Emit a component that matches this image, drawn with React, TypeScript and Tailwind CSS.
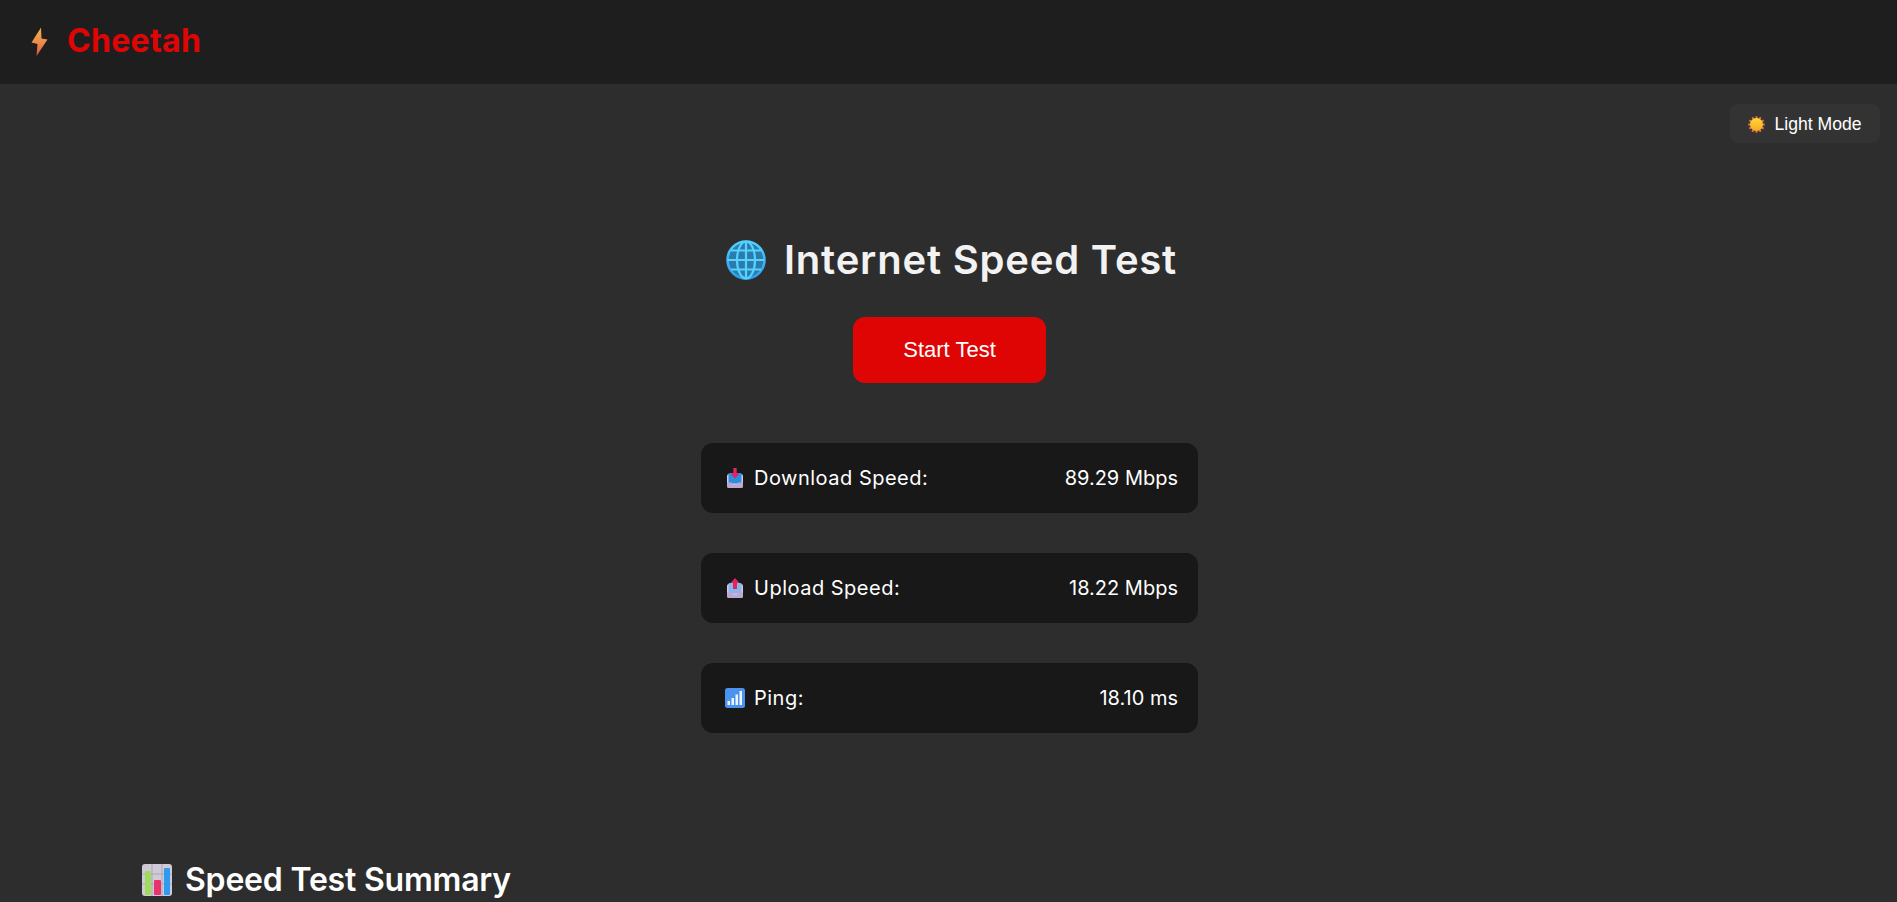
import React from 'react'

const poppins = "font-['Inter','Noto_Sans',sans-serif]"

function BoltIcon() {
  return (
    <svg width="17" height="30" viewBox="0 0 17 30" className="shrink-0">
      <defs>
        <linearGradient id="bolt" x1="0" y1="0" x2="0" y2="1">
          <stop offset="0" stopColor="#f2b04c" />
          <stop offset="0.55" stopColor="#ec8a4a" />
          <stop offset="1" stopColor="#d9534f" />
        </linearGradient>
      </defs>
      <path d="M10 0.5 L0.5 15.5 L6.5 17 L5.5 29 L16.5 12.5 L10.5 11.5 Z" fill="url(#bolt)" />
    </svg>
  )
}

function SunIcon() {
  const rays = [0, 30, 60, 90, 120, 150, 180, 210, 240, 270, 300, 330]
  return (
    <svg width="17" height="17" viewBox="0 0 34 34" className="shrink-0">
      <defs>
        <linearGradient id="sun" x1="0" y1="0" x2="0" y2="1">
          <stop offset="0" stopColor="#fdd835" />
          <stop offset="1" stopColor="#f9a825" />
        </linearGradient>
      </defs>
      {rays.map((r) => (
        <rect key={r} x="15" y="0.5" width="4" height="5" fill="#e8743b" transform={`rotate(${r} 17 17)`} />
      ))}
      <circle cx="17" cy="17" r="13" fill="url(#sun)" />
    </svg>
  )
}

function GlobeIcon() {
  return (
    <svg width="40" height="40" viewBox="0 0 40 40" fill="none" className="shrink-0">
      <defs>
        <linearGradient id="globe-ring" x1="0" y1="0" x2="0" y2="1">
          <stop offset="0" stopColor="#4fd0ff" />
          <stop offset="1" stopColor="#2f9cf0" />
        </linearGradient>
      </defs>
      <circle cx="20" cy="20" r="18.5" fill="#2b7cab" stroke="url(#globe-ring)" strokeWidth="2.5" />
      <g stroke="#55d2ff" strokeWidth="2.2">
        <ellipse cx="20" cy="20" rx="9" ry="18.5" />
        <path d="M20 1.5V38.5M1.5 20H38.5M5 10.5H35M5 29.5H35" />
      </g>
    </svg>
  )
}

function InboxIcon({ up }: { up?: boolean }) {
  return (
    <svg width="16" height="20" viewBox="0 0 16 20" className="shrink-0">
      <rect x="0" y="6" width="16" height="14" rx="2" fill="#d8c6e4" />
      <rect x="1.5" y="5" width="13" height="10.5" rx="1" fill={up ? '#8ab4ea' : '#2b8fdd'} />
      <path d="M0 14.5 H4.5 L6 16.5 H10 L11.5 14.5 H16 V18 a2 2 0 0 1 -2 2 H2 a2 2 0 0 1 -2 -2 Z" fill="#bda8d2" />
      {up ? (
        <path d="M8 0 L12.5 5 H10 V11 H6 V5 H3.5 Z" fill="#e0245e" />
      ) : (
        <path d="M6.3 0 H9.7 V5.5 H12.5 L8 10.5 L3.5 5.5 H6.3 Z" fill="#e0245e" />
      )}
    </svg>
  )
}

function SignalIcon() {
  return (
    <svg width="20" height="20" viewBox="0 0 20 20" className="shrink-0">
      <rect x="0" y="0" width="20" height="20" rx="2.5" fill="#4a94f0" />
      <g fill="#eef4fd">
        <rect x="2.5" y="13" width="2.5" height="4" />
        <rect x="6.5" y="10" width="2.5" height="7" />
        <rect x="10.5" y="6.5" width="2.5" height="10.5" />
        <rect x="14.5" y="3" width="2.5" height="14" />
      </g>
    </svg>
  )
}

function ChartIcon() {
  return (
    <svg width="30" height="32" viewBox="0 0 30 32" className="shrink-0">
      <rect x="0" y="0" width="30" height="32" rx="3" fill="#cfcad6" />
      <path d="M10 0V32M20 0V32M0 10H30M0 20H30" stroke="#aca6b6" strokeWidth="1" />
      <rect x="3" y="7" width="6" height="24" rx="1" fill="#9fdc5a" />
      <rect x="12" y="16" width="7" height="15" rx="1" fill="#e8336f" />
      <rect x="22" y="4" width="6" height="27" rx="1" fill="#2f9bef" />
    </svg>
  )
}

const results = [
  { label: 'Download Speed:', value: '89.29 Mbps', icon: <InboxIcon /> },
  { label: 'Upload Speed:', value: '18.22 Mbps', icon: <InboxIcon up /> },
  { label: 'Ping:', value: '18.10 ms', icon: <SignalIcon /> },
]

export default function App() {
  return (
    <div className={`h-screen overflow-hidden bg-[#2d2d2d] ${poppins}`}>
      {/* Navbar */}
      <header className="flex h-[84px] items-center gap-[19px] bg-[#1e1e1e] pl-[31px]">
        <BoltIcon />
        <span className="pb-[2px] text-[32px] font-bold tracking-[0.3px] text-[#e00505]">Cheetah</span>
      </header>

      <main>
        <div className="flex justify-end pt-5 pr-[17px]">
          <button className="flex h-[39px] w-[150px] items-center justify-center gap-[9px] rounded-lg bg-[#333333] pt-[1px] font-['Liberation_Sans',sans-serif] text-[17.6px] text-white">
            <SunIcon />
            Light Mode
          </button>
        </div>

        <div className="flex flex-col items-center pl-[2px]">
          <h1 className="mt-[93px] ml-[4px] flex h-[48px] items-center gap-[18px] text-[40px] font-semibold tracking-[0.8px] text-[#f2f2f2]">
            <GlobeIcon />
            Internet Speed Test
          </h1>

          <button className="mt-[33px] h-[66px] w-[193px] rounded-xl bg-[#e00505] pb-[2px] font-['Liberation_Sans',sans-serif] text-[22px] text-white">
            Start Test
          </button>

          <div className="mt-[60px] flex w-[497px] flex-col gap-10">
            {results.map((row) => (
              <div
                key={row.label}
                className="flex h-[70px] items-center justify-between rounded-xl bg-[#181818] pr-5 pl-6 text-xl text-white"
              >
                <span className="flex items-center gap-[9px] tracking-[0.5px]">
                  <span className="flex w-[20px] justify-center">{row.icon}</span>
                  {row.label}
                </span>
                <span>{row.value}</span>
              </div>
            ))}
          </div>
        </div>

        <h2 className="mt-[123px] flex items-center gap-[13px] pl-[142px] text-[32px] font-semibold tracking-[-0.2px] text-white">
          <ChartIcon />
          Speed Test Summary
        </h2>
      </main>
    </div>
  )
}
